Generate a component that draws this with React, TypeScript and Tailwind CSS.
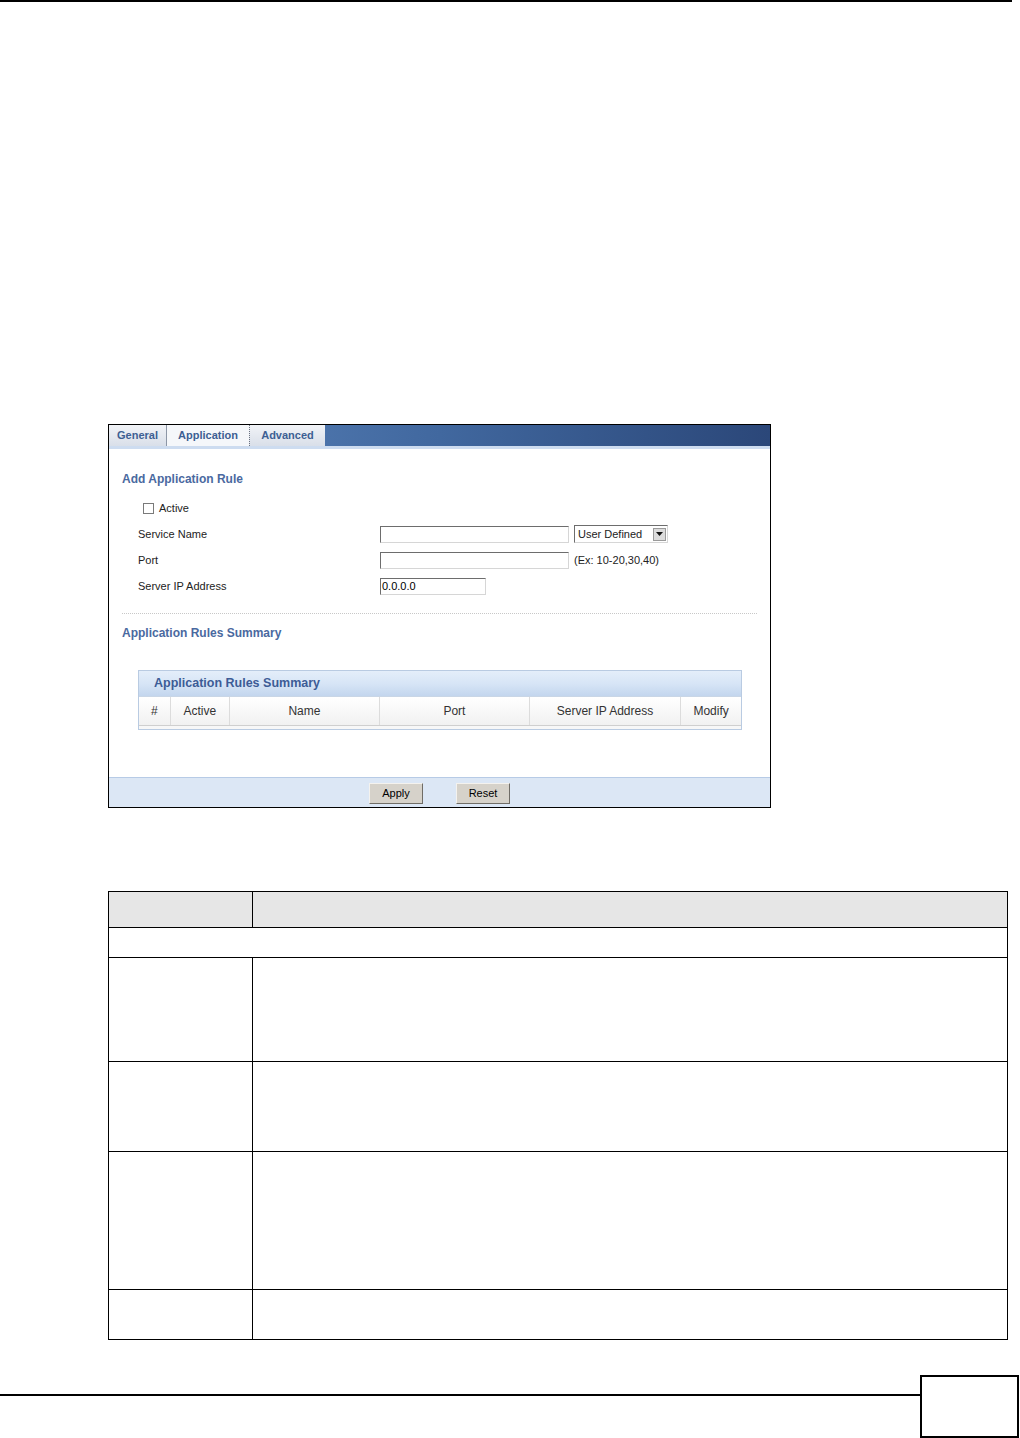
import React from "react";

const font = { fontFamily: '"Liberation Sans", Arial, sans-serif' };

function TextInput({ width, value }: { width: string; value?: string }) {
  return (
    <div
      className={`${width} h-[17px] border border-t-[#6d6d6d] border-l-[#6d6d6d] border-b-[#d6d6d6] border-r-[#d6d6d6] bg-white px-[1px] text-[11px] leading-[15px] text-black`}
    >
      {value}
    </div>
  );
}

function Button({ label }: { label: string }) {
  return (
    <div className="flex h-[21px] w-[54px] items-center justify-center border border-t-[#f4f2ee] border-l-[#f4f2ee] border-b-[#6f6c66] border-r-[#6f6c66] bg-[#d6d2ca] text-[11px] text-black">
      {label}
    </div>
  );
}

function RouterPanel() {
  const cols = [
    { label: "#", w: "w-[32px]" },
    { label: "Active", w: "w-[59px]" },
    { label: "Name", w: "w-[151px]" },
    { label: "Port", w: "w-[150px]" },
    { label: "Server IP Address", w: "w-[152px]" },
    { label: "Modify", w: "w-[60px]" },
  ];

  return (
    <div className="ml-[108px] mt-[422px] flex h-[384px] w-[663px] flex-col border border-black bg-white">
      {/* tab strip */}
      <div className="flex h-[21px] bg-gradient-to-r from-[#5d86bd] via-[#41689f] to-[#2b4779]">
        <div className="flex w-[58px] items-center justify-center border-r border-[#8c96a6] bg-gradient-to-b from-[#f1f3f7] to-[#d9dfe9] text-[11px] font-bold text-[#3d5f93]">
          General
        </div>
        <div className="flex w-[82px] items-center justify-center bg-[#f5f7fa] text-[11px] font-bold text-[#3d5f93]">
          Application
        </div>
        <div className="flex w-[76px] items-center justify-center border-l border-dotted border-[#6b7280] bg-gradient-to-b from-[#f1f3f7] to-[#d9dfe9] text-[11px] font-bold text-[#3d5f93]">
          Advanced
        </div>
      </div>
      <div className="h-[3px] bg-[#cddcf0]" />

      <div className="mt-[22px] pl-[13px] text-[12px] font-bold leading-[16px] text-[#4a69a0]">
        Add Application Rule
      </div>

      <div className="mt-[8px] flex h-[26px] items-center pl-[34px] text-[11px] text-[#222]">
        <div className="h-[11px] w-[11px] border border-[#7a7a7a] bg-white" />
        <span className="ml-[5px]">Active</span>
      </div>

      <div className="flex h-[26px] items-center pl-[29px] text-[11px] text-[#222]">
        <span className="w-[242px]">Service Name</span>
        <TextInput width="w-[189px]" />
        <div className="ml-[5px] flex h-[18px] w-[94px] items-center justify-between border border-t-[#6d6d6d] border-l-[#6d6d6d] border-b-[#d6d6d6] border-r-[#d6d6d6] bg-white pl-[3px] pr-[1px]">
          <span>User Defined</span>
          <div className="flex h-[13px] w-[13px] items-center justify-center border border-[#9a9a9a] bg-[#dcdcdc]">
            <svg width="7" height="4" viewBox="0 0 7 4">
              <path d="M0 0h7L3.5 4z" fill="#111" />
            </svg>
          </div>
        </div>
      </div>

      <div className="flex h-[26px] items-center pl-[29px] text-[11px] text-[#222]">
        <span className="w-[242px]">Port</span>
        <TextInput width="w-[189px]" />
        <span className="ml-[5px]">(Ex: 10-20,30,40)</span>
      </div>

      <div className="flex h-[26px] items-center pl-[29px] text-[11px] text-[#222]">
        <span className="w-[242px]">Server IP Address</span>
        <TextInput width="w-[106px]" value="0.0.0.0" />
      </div>

      <div className="mx-[13px] mt-[14px] border-t border-dotted border-[#c8c8c8]" />

      <div className="mt-[11px] pl-[13px] text-[12px] font-bold leading-[16px] text-[#4a69a0]">
        Application Rules Summary
      </div>

      {/* summary table */}
      <div className="ml-[29px] mt-[29px] w-[604px] border border-[#b9cbe2] bg-white">
        <div className="flex h-[25px] items-center bg-gradient-to-b from-[#e4eefa] via-[#d7e5f6] to-[#c3d6ee] pl-[15px] text-[12.5px] font-bold text-[#3d5c96]">
          Application Rules Summary
        </div>
        <div className="flex h-[29px] border-t border-[#c9d6e6] bg-gradient-to-b from-white to-[#f1f1f1] text-[12px] text-[#333]">
          {cols.map((c, i) => (
            <div
              key={c.label}
              className={`${c.w} flex items-center justify-center ${i < cols.length - 1 ? "border-r border-[#dcdcdc]" : ""}`}
            >
              {c.label}
            </div>
          ))}
        </div>
        <div className="h-[4px] border-t border-[#cfcfcf] bg-[#f7f7f7]" />
      </div>

      {/* footer */}
      <div className="mt-auto flex h-[30px] items-center justify-center gap-[33px] border-t border-[#b7cbe6] bg-[#dce7f5] pt-[1px]">
        <Button label="Apply" />
        <Button label="Reset" />
      </div>
    </div>
  );
}

function DescriptionTable() {
  const rows = ["h-[104px]", "h-[90px]", "h-[138px]", "h-[50px]"];
  return (
    <table className="ml-[108px] mt-[83px] w-[900px] border-collapse">
      <tbody>
        <tr className="h-[36px] bg-[#e6e6e6]">
          <td className="w-[144px] border-[1.5px] border-black" />
          <td className="border-[1.5px] border-black" />
        </tr>
        <tr className="h-[30px]">
          <td colSpan={2} className="border-[1.5px] border-black" />
        </tr>
        {rows.map((h, i) => (
          <tr key={i} className={h}>
            <td className="border-[1.5px] border-black" />
            <td className="border-[1.5px] border-black" />
          </tr>
        ))}
      </tbody>
    </table>
  );
}

export default function App() {
  return (
    <div className="relative h-[1438px] w-[1020px] overflow-hidden bg-white" style={font}>
      <div className="h-[2px] w-[1012px] bg-black" />
      <RouterPanel />
      <DescriptionTable />
      <div className="mt-[35px] flex items-start">
        <div className="mt-[19px] h-[2px] w-[920px] bg-black" />
        <div className="h-[63px] w-[99px] border-2 border-black" />
      </div>
    </div>
  );
}
